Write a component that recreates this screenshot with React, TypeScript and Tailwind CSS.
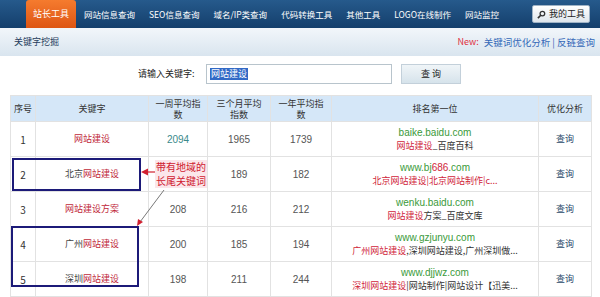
import React from "react";

const tabs = ["网站信息查询", "SEO信息查询", "域名/IP类查询", "代码转换工具", "其他工具", "LOGO在线制作", "网站监控"];

type Row = {
  no: string;
  pre: string;
  kw: string;
  post: string;
  week: string;
  month: string;
  year: string;
  site: React.ReactNode;
  title: React.ReactNode;
};

const R = ({ children }: { children: React.ReactNode }) => <span className="text-[#d0253a]">{children}</span>;

const rows: Row[] = [
  {
    no: "1", pre: "", kw: "网站建设", post: "", week: "2094", month: "1965", year: "1739",
    site: "baike.baidu.com",
    title: (<><R>网站建设</R>_百度百科</>),
  },
  {
    // week value of this row sits under the note label in the shot
    no: "2", pre: "北京", kw: "网站建设", post: "", week: "", month: "189", year: "182",
    site: (<>www.bj<span className="text-[#d0253a]">686</span>.com</>),
    title: (<span className="text-[#d0253a]">北京网站建设|北京网站制作|c...</span>),
  },
  {
    no: "3", pre: "", kw: "网站建设", post: "方案", week: "208", month: "216", year: "212",
    site: "wenku.baidu.com",
    title: (<><R>网站建设</R>方案_百度文库</>),
  },
  {
    no: "4", pre: "广州", kw: "网站建设", post: "", week: "200", month: "185", year: "194",
    site: "www.gzjunyu.com",
    title: (<><R>广州网站建设</R>,深圳网站建设,广州深圳做...</>),
  },
  {
    no: "5", pre: "深圳", kw: "网站建设", post: "", week: "198", month: "211", year: "244",
    site: "www.djjwz.com",
    title: (<><R>深圳网站建设</R>|网站制作|网站设计【迅美...</>),
  },
];

export default function App() {
  return (
    <div className="relative w-[600px] h-[297px] overflow-hidden bg-white font-['Noto_Sans_CJK_SC','Liberation_Sans',sans-serif] text-[9px] text-[#333]">
      {/* top nav */}
      <div className="flex items-end h-[28px] bg-gradient-to-b from-[#265a8c] to-[#143f6c] pl-[26px] pr-[10px] whitespace-nowrap">
        <div className="shrink-0 h-[28px] w-[50px] flex items-center justify-center rounded-t-[3px] bg-gradient-to-b from-[#f57b2e] to-[#de5512] text-white">站长工具</div>
        <div className="flex items-center h-[28px] text-white text-[8.5px] pl-[1px]">
          {tabs.map((t) => (
            <span key={t} className="shrink-0 px-[7px]">{t}</span>
          ))}
        </div>
        <div className="shrink-0 ml-auto mb-[5px] h-[18px] w-[58px] flex items-center justify-center gap-[3px] rounded-[2px] bg-gradient-to-b from-white to-[#dfe6ec] border border-[#9fb3c6] text-[#222]">
          <svg width="9" height="9" viewBox="0 0 10 10">
            <circle cx="6" cy="4" r="2.6" fill="none" stroke="#333" strokeWidth="1.4" />
            <line x1="4.2" y1="5.8" x2="1" y2="9" stroke="#333" strokeWidth="1.8" />
          </svg>
          <span>我的工具</span>
        </div>
      </div>

      {/* sub bar */}
      <div className="flex items-center h-[28px] bg-gradient-to-b from-[#f2f6fa] to-[#d9e5ef] pl-[14px] pr-[5px]">
        <span className="text-[#1f3c5c]">关键字挖掘</span>
        <span className="ml-auto text-[#e03040]">New:</span>
        <span className="ml-[5px] text-[#3468b8] text-[9.5px]">关键词优化分析 | 反链查询</span>
      </div>

      {/* search row */}
      <div className="flex items-center h-[35px] pl-[138px]">
        <span className="w-[68px] text-[#222]">请输入关键字:</span>
        <div className="h-[20px] w-[186px] border border-[#b8c4cc] flex items-center px-[3px]">
          <span className="bg-[#3169c6] text-white px-[1px] leading-[12px]">网站建设</span>
        </div>
        <div className="ml-[9px] h-[20px] w-[60px] flex items-center justify-center border border-[#c3d0da] bg-gradient-to-b from-[#f0f5f8] to-[#d6e3eb] text-[#222]">查 询</div>
      </div>

      {/* table */}
      <div className="px-[10px] pt-[4px]">
        <table className="w-[581px] table-fixed border-collapse border border-[#d4d4d4]">
          <colgroup>
            <col className="w-[25px]" />
            <col className="w-[113px]" />
            <col className="w-[59px]" />
            <col className="w-[63px]" />
            <col className="w-[61px]" />
            <col className="w-[207px]" />
            <col className="w-[53px]" />
          </colgroup>
          <thead>
            <tr className="h-[26px] bg-[#d5e7f8] text-[#333] leading-[11px]">
              <th className="font-normal border border-[#e2e2e2]">序号</th>
              <th className="font-normal border border-[#e2e2e2]">关键字</th>
              <th className="font-normal border border-[#e2e2e2] px-[6px]">一周平均指数</th>
              <th className="font-normal border border-[#e2e2e2] px-[6px]">三个月平均指数</th>
              <th className="font-normal border border-[#e2e2e2] px-[6px]">一年平均指数</th>
              <th className="font-normal border border-[#e2e2e2]">排名第一位</th>
              <th className="font-normal border border-[#e2e2e2]">优化分析</th>
            </tr>
          </thead>
          <tbody>
            {rows.map((r) => (
              <tr key={r.no} className="h-[35px] text-center">
                <td className="border border-[#e2e2e2] text-[10px]">{r.no}</td>
                <td className="border border-[#e2e2e2]">
                  <span className="text-[#444]">{r.pre}</span>
                  <span className="text-[#c0283a]">{r.kw}</span>
                  <span className="text-[#c0283a]">{r.post}</span>
                </td>
                <td className={"border border-[#e2e2e2] text-[10px] font-['Liberation_Sans',sans-serif] " + (r.no === "1" ? "text-[#3a8a8a]" : "text-[#555]")}>{r.week}</td>
                <td className="border border-[#e2e2e2] text-[10px] font-['Liberation_Sans',sans-serif] text-[#555]">{r.month}</td>
                <td className="border border-[#e2e2e2] text-[10px] font-['Liberation_Sans',sans-serif] text-[#555]">{r.year}</td>
                <td className="border border-[#e2e2e2] leading-[13px]">
                  <div className="text-[10px] font-['Liberation_Sans',sans-serif] text-[#3a9a3a]">{r.site}</div>
                  <div className="text-[#333] whitespace-nowrap">{r.title}</div>
                </td>
                <td className="border border-[#e2e2e2] text-[#2a4a6a]">查询</td>
              </tr>
            ))}
          </tbody>
        </table>
      </div>

      {/* annotation overlay */}
      <svg className="absolute left-0 top-0" width="600" height="297" viewBox="0 0 600 297">
        <rect x="13" y="159" width="127" height="31" fill="none" stroke="#1c1a78" strokeWidth="2" />
        <rect x="12" y="227" width="126" height="59" fill="none" stroke="#1c1a78" strokeWidth="2" />
        <line x1="155" y1="172" x2="146" y2="172" stroke="#d02030" strokeWidth="1.2" />
        <polygon points="141,172 148,168.5 148,175.5" fill="#d02030" />
        <line x1="164" y1="190" x2="140" y2="222" stroke="#777" strokeWidth="1" />
        <polygon points="137,226 138,219 143,222" fill="#d02030" />
      </svg>
      <div className="absolute left-[155px] top-[160px] w-[52px] bg-[#fbe6ea] text-[#d02030] leading-[14px] text-[10px] text-center">带有地域的长尾关键词</div>
    </div>
  );
}
